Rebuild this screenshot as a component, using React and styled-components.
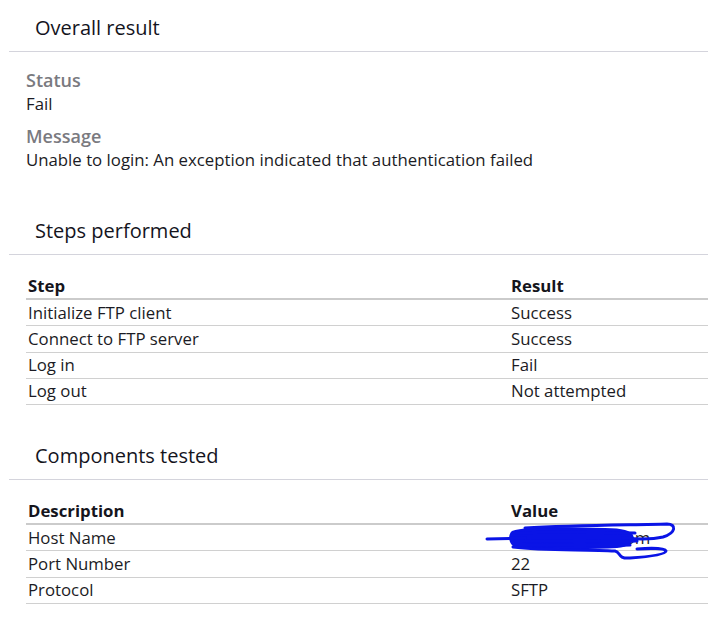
import React from 'react';
import styled, { createGlobalStyle } from 'styled-components';

const GlobalStyle = createGlobalStyle`
	html, body {
		margin: 0;
		padding: 0;
		background: #ffffff;
	}
	body {
		font-family: "Open Sans", "Noto Sans", sans-serif;
		color: #1b1b24;
		overflow: hidden;
	}
`;

const Page = styled.div`
	width: 708px;
	padding-bottom: 20px;
`;

const Section = styled.section`
	margin-left: 9px;
	margin-top: ${props => props.$top || 0}px;
`;

const SectionTitle = styled.h2`
	margin: 0;
	padding: 15px 0 10px 26px;
	font-size: 20px;
	font-weight: 500;
	line-height: 26px;
	color: #14141d;
	border-bottom: 1px solid #d4d4dc;
`;

const Body = styled.div`
	padding: 17px 0 0 17px;
`;

const Field = styled.div`
	margin-bottom: ${props => props.$gap || 0}px;
`;

const Label = styled.div`
	font-size: 18px;
	font-weight: 600;
	line-height: 22px;
	color: #7a7a7f;
`;

const Value = styled.div`
	font-size: 16.8px;
	line-height: 24px;
	padding-top: 1px;
`;

const Table = styled.div`
	margin: 18px 0 0 17px;
	display: grid;
	grid-template-columns: 483px 1fr;
	font-size: 16.8px;
`;

const HeadCell = styled.div`
	padding: 0 0 0 2px;
	font-weight: 700;
	line-height: 25px;
	border-bottom: 2px solid #cbcbcb;
	color: #15151c;
`;

const Cell = styled.div`
	position: relative;
	padding: 0.5px 0 0 2px;
	line-height: 24.75px;
	border-bottom: 1px solid #d0d0d0;
	white-space: nowrap;
`;

const Scribble = styled.svg`
	position: absolute;
	left: -24px;
	top: -4px;
	width: 190px;
	height: 40px;
	overflow: visible;
`;

const steps = [
	['Initialize FTP client', 'Success'],
	['Connect to FTP server', 'Success'],
	['Log in', 'Fail'],
	['Log out', 'Not attempted'],
];

const components = [
	['Host Name', 'sftp.example.com', true],
	['Port Number', '22'],
	['Protocol', 'SFTP'],
];

function Redaction() {
	return (
		<Scribble viewBox="0 0 190 40">
			<path
				d="M27,10 C40,5 80,6 120,7 C138,7 146,10 148,14 C150,20 145,26 132,27 C100,29 60,28 30,26 C24,24 22,14 27,10 Z"
				fill="#0a14e6"
			/>
			<g fill="none" stroke="#0a14e6" strokeWidth="3" strokeLinecap="round" strokeLinejoin="round">
				<path d="M2,18 L40,17" />
				<path d="M40,7 C90,4 150,4 182,3 C192,3 191,12 178,16 C165,19 150,18 138,17" />
				<path d="M28,26 C60,30 100,28 130,30 C136,31 132,38 145,37 C160,36 180,34 181,30 C180,27 165,27 152,28" />
				<path d="M30,12 C70,10 120,12 150,12 M30,20 C80,19 120,21 152,20 M35,24 C80,23 120,25 145,24" />
			</g>
		</Scribble>
	);
}

function DataTable({ head, rows }) {
	return (
		<Table>
			<HeadCell>{head[0]}</HeadCell>
			<HeadCell>{head[1]}</HeadCell>
			{rows.map(([name, value, hidden]) => (
				<React.Fragment key={name}>
					<Cell>{name}</Cell>
					<Cell>
						{value}
						{hidden && <Redaction />}
					</Cell>
				</React.Fragment>
			))}
		</Table>
	);
}

export default function App() {
	return (
		<Page>
			<GlobalStyle />
			<Section>
				<SectionTitle>Overall result</SectionTitle>
				<Body>
					<Field $gap={9}>
						<Label>Status</Label>
						<Value>Fail</Value>
					</Field>
					<Field>
						<Label>Message</Label>
						<Value>Unable to login: An exception indicated that authentication failed</Value>
					</Field>
				</Body>
			</Section>
			<Section $top={31}>
				<SectionTitle>Steps performed</SectionTitle>
				<DataTable head={['Step', 'Result']} rows={steps} />
			</Section>
			<Section $top={23}>
				<SectionTitle>Components tested</SectionTitle>
				<DataTable head={['Description', 'Value']} rows={components} />
			</Section>
		</Page>
	);
}
